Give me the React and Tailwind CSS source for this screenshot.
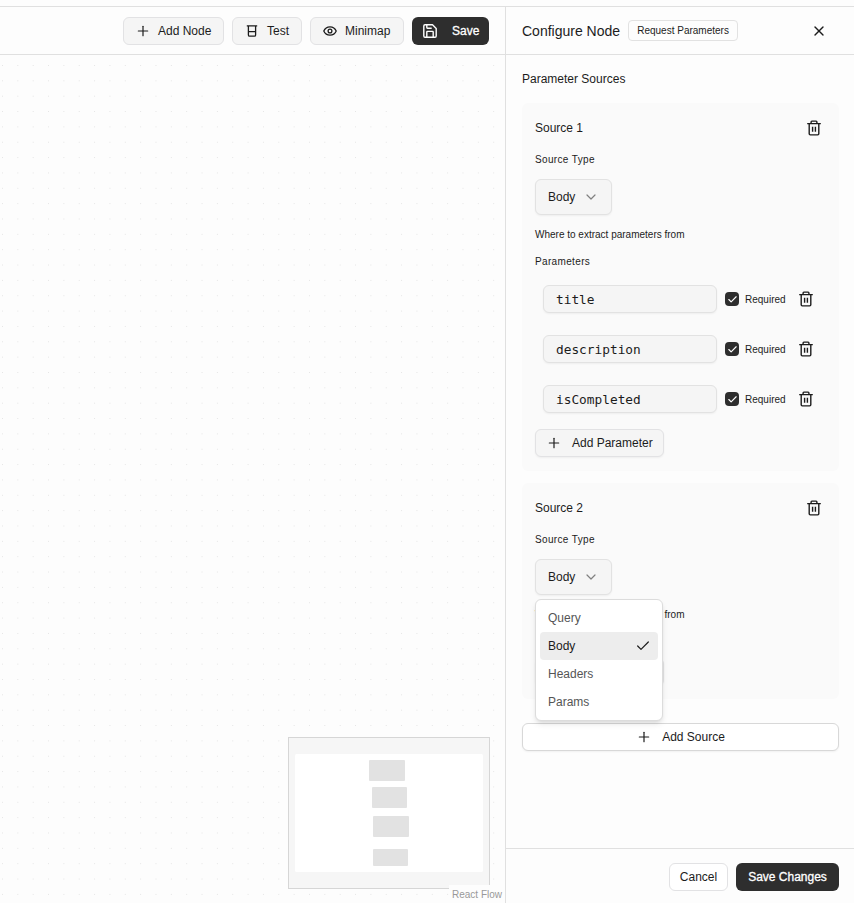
import { Plus, X, Check, ChevronDown } from "lucide-react";

/** Bin with a boxed lid and two bars */
function TrashIcon({ className }) {
    return (
        <svg className={className} width="16" height="16" viewBox="0 0 16 16" fill="none" stroke="currentColor" strokeWidth="1.4">
            <path d="M1.2 3.6h13.6M5.1 3.4V1.9q0-.8.8-.8h4.2q.8 0 .8.8v1.5M3.2 3.6v10.2q0 1.1 1.1 1.1h7.4q1.1 0 1.1-1.1V3.6M6.6 6.7v5M9.4 6.7v5" />
        </svg>
    );
}

function BeakerIcon() {
    return (
        <svg width="16" height="16" viewBox="0 0 16 16" fill="none" stroke="currentColor" strokeWidth="1.3">
            <path d="M2.8 2.8h10.4M4.4 2.8v9.2q0 1.2 1.2 1.2h4.8q1.2 0 1.2-1.2V2.8M4.4 8.7h7.2" />
        </svg>
    );
}

function EyeIcon() {
    return (
        <svg width="16" height="16" viewBox="0 0 16 16" fill="none" stroke="currentColor" strokeWidth="1.3">
            <path d="M1.8 8C2.9 5.4 5.2 3.8 8 3.8S13.1 5.4 14.2 8C13.1 10.6 10.8 12.2 8 12.2S2.9 10.6 1.8 8Z" />
            <circle cx="8" cy="8" r="1.9" />
        </svg>
    );
}

function SaveIcon() {
    return (
        <svg width="16" height="16" viewBox="0 0 16 16" fill="none" stroke="currentColor" strokeWidth="1.4" strokeLinejoin="round">
            <path d="M10.5 1.8H3q-1.2 0-1.2 1.2v10q0 1.2 1.2 1.2h10q1.2 0 1.2-1.2V5.5Z" />
            <path d="M4.8 14V9q0-.6.6-.6h5.2q.6 0 .6.6v5M4.8 2v2.6q0 .6.6.6h4.3" />
        </svg>
    );
}

/** Outline button used in the toolbar and the panel */
function SoftButton({ icon, label, className }) {
    return (
        <button className={`flex h-7 items-center rounded-md border border-[#e2e2e4] bg-[#f5f5f5] ${className}`}>
            {icon}
            {label}
        </button>
    );
}

function Toolbar() {
    return (
        <header className="flex h-12 shrink-0 items-center justify-end gap-2 border-b border-[#e0e0e0] bg-[#fdfdfd] pr-4">
            <SoftButton className="w-[101px] gap-[7px] pl-[11px]" icon={<Plus size={16} strokeWidth={1.8} />} label="Add Node" />
            <SoftButton className="w-[70px] gap-[7px] pl-[11px]" icon={<BeakerIcon />} label="Test" />
            <SoftButton className="w-[94px] gap-[7px] pl-[11px]" icon={<EyeIcon />} label="Minimap" />
            <button className="flex h-7 w-[77px] items-center gap-[14px] rounded-md bg-[#2e2e2e] pl-[10px] text-white [-webkit-text-stroke:0.3px]">
                <SaveIcon />
                Save
            </button>
        </header>
    );
}

const NODES = [
    { x: 80, y: 22, w: 36, h: 21 },
    { x: 83, y: 49, w: 35, h: 21 },
    { x: 84, y: 78, w: 36, h: 21 },
    { x: 84, y: 111, w: 35, h: 17 },
];

/** Canvas with the dotted background and the minimap in its corner */
function Canvas() {
    return (
        <div className="relative flex-1 bg-[#fdfdfd]">
            <svg className="absolute inset-0 h-full w-full">
                <pattern id="dots" x="2" y="10" width="15.35" height="15.35" patternUnits="userSpaceOnUse">
                    <circle cx="0.5" cy="0.5" r="0.5" fill="#dedede" />
                </pattern>
                <rect width="100%" height="100%" fill="url(#dots)" />
            </svg>
            <svg className="absolute right-[15px] bottom-[14px] border border-[#d6d6d6] bg-[#f6f6f6]" width="202" height="152">
                <rect x="6" y="16" width="188" height="118" rx="1.5" fill="#fff" />
                {NODES.map((n) => (
                    <rect key={n.y} x={n.x} y={n.y} width={n.w} height={n.h} rx="1" fill="#e2e2e2" />
                ))}
            </svg>
            <span className="absolute right-0 bottom-0 bg-[#fdfdfd] px-[3px] pt-[3px] pb-px text-[10px] leading-[14px] text-[#999]">React Flow</span>
        </div>
    );
}

function ParameterRow({ name }) {
    return (
        <div className="flex h-[50px] items-center pl-2">
            <div className="flex h-7 w-[174px] items-center rounded-md border border-[#e2e2e2] bg-[#f5f5f5] pt-px pl-3 font-['DejaVu_Sans_Mono',monospace] text-[12.8px] shadow-xs">
                {name}
            </div>
            <span className="ml-2 flex size-[14px] items-center justify-center rounded-[4px] bg-[#2e2e2e] text-white">
                <Check size={11} strokeWidth={2.5} />
            </span>
            <span className="ml-[6px] w-[53px] pt-[2px] text-[10px]">Required</span>
            <TrashIcon />
        </div>
    );
}

function SourceHeader({ title }) {
    return (
        <>
            <div className="flex h-4 items-center justify-between">
                <span>{title}</span>
                <TrashIcon className="mr-1" />
            </div>
            <div className="mt-4 text-[10px] leading-4 tracking-[0.35px]">Source Type</div>
            <button className="mt-[11px] flex h-9 w-[77px] items-center gap-2 rounded-md border border-[#e2e2e2] bg-[#f5f5f5] pl-3 shadow-xs">
                Body
                <ChevronDown size={16} strokeWidth={1.8} className="text-[#808080]" />
            </button>
            <div className="mt-3 text-[10px] leading-4">Where to extract parameters from</div>
        </>
    );
}

/** Open list of the second select */
function SourceTypeMenu() {
    return (
        <div className="absolute top-[116px] left-[13px] z-10 flex h-[122px] w-32 flex-col rounded-md border border-[#dcdcdc] bg-white p-1 text-[#555] shadow-md">
            {["Query", "Body", "Headers", "Params"].map((name) => (
                <div
                    key={name}
                    className={`flex h-7 shrink-0 items-center justify-between rounded pr-[7px] pl-2 ${name === "Body" ? "bg-[#ededed] text-[#1c1c1c]" : ""}`}
                >
                    {name}
                    {name === "Body" && <Check size={16} strokeWidth={1.8} />}
                </div>
            ))}
        </div>
    );
}

function ConfigPanel() {
    return (
        <aside className="flex w-[349px] shrink-0 flex-col border-l border-[#e0e0e0] bg-[#fdfdfd]">
            <div className="flex h-12 shrink-0 items-center border-b border-[#e0e0e0] pl-4">
                <span className="text-sm">Configure Node</span>
                <span className="ml-2 flex h-[21px] w-[110px] items-center justify-center rounded border border-[#e2e2e2] text-[10px]">Request Parameters</span>
                <X size={16} strokeWidth={2} className="mr-[27px] ml-auto" />
            </div>
            <div className="flex-1 pt-4 pr-[15px] pl-4">
                <div className="leading-4">Parameter Sources</div>
                <section className="mt-4 h-[368px] rounded-md bg-[#fafafa] px-[13px] pt-[17px]">
                    <SourceHeader title="Source 1" />
                    <div className="mt-[11px] mb-1 text-[10px] leading-4 tracking-[0.35px]">Parameters</div>
                    <ParameterRow name="title" />
                    <ParameterRow name="description" />
                    <ParameterRow name="isCompleted" />
                    <SoftButton className="mt-[5px] w-[129px] gap-[10px] pl-[10px] shadow-xs" icon={<Plus size={16} strokeWidth={1.8} />} label="Add Parameter" />
                </section>
                <section className="relative mt-3 h-[216px] rounded-md bg-[#fafafa] px-[13px] pt-[17px]">
                    <SourceHeader title="Source 2" />
                    <SoftButton className="mt-[35px] w-[129px] gap-[10px] pl-[10px] shadow-xs" icon={<Plus size={16} strokeWidth={1.8} />} label="Add Parameter" />
                    <SourceTypeMenu />
                </section>
                <button className="mt-6 flex h-7 w-full items-center justify-center gap-[10px] rounded-md border border-[#d8d8d8] bg-white shadow-xs">
                    <Plus size={16} strokeWidth={1.8} />
                    Add Source
                </button>
            </div>
            <footer className="flex h-[55px] shrink-0 items-center justify-end gap-2 border-t border-[#e0e0e0] pt-[2px] pr-[15px]">
                <button className="h-7 w-[59px] rounded-md border border-[#e2e2e4] bg-white">Cancel</button>
                <button className="h-7 w-[103px] rounded-md bg-[#2e2e2e] text-white [-webkit-text-stroke:0.3px]">Save Changes</button>
            </footer>
        </aside>
    );
}

export default function App() {
    return (
        <div className="h-[903px] w-[854px] overflow-hidden bg-[#fdfdfd] pt-[6px] font-['Liberation_Sans',Arial,sans-serif] text-xs text-[#1c1c1c]">
            <div className="flex h-[897px] border-t border-[#e0e0e0]">
                <main className="flex flex-1 flex-col">
                    <Toolbar />
                    <Canvas />
                </main>
                <ConfigPanel />
            </div>
        </div>
    );
}
